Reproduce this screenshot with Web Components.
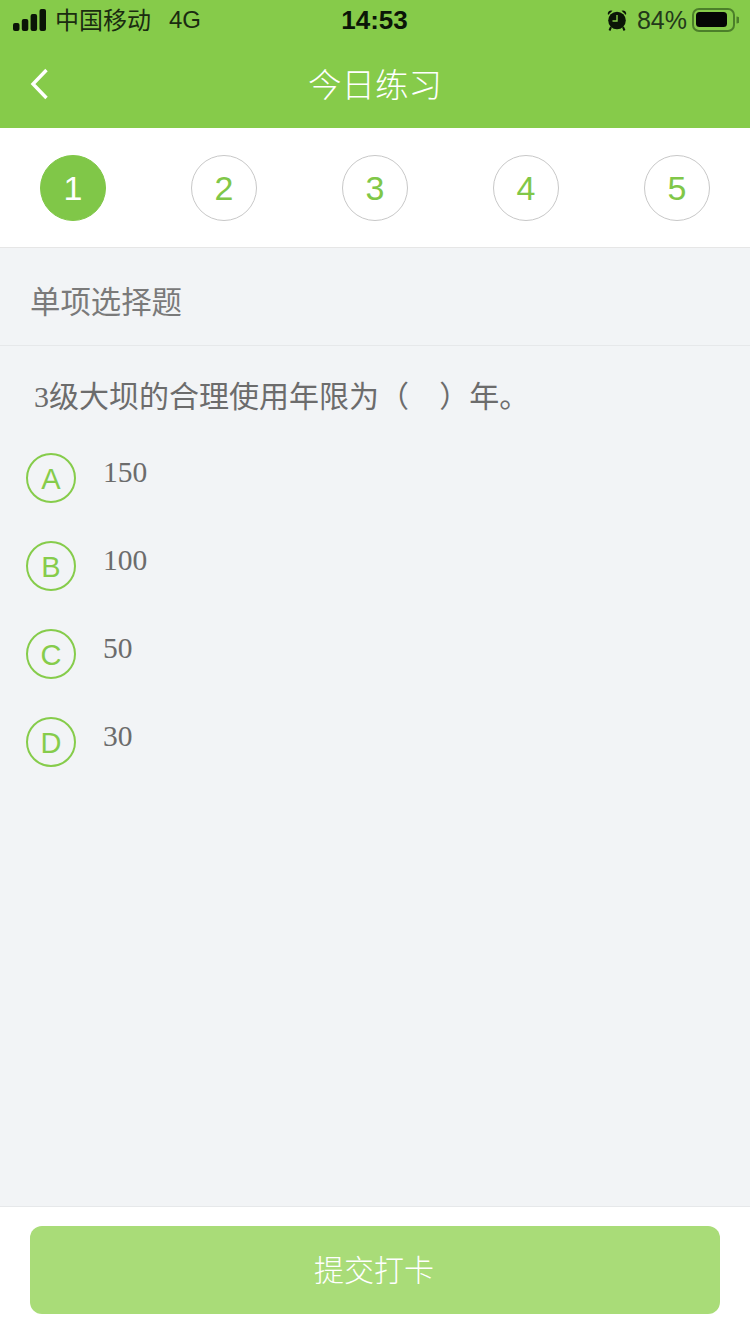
<!DOCTYPE html>
<html lang="zh">
<head>
<meta charset="utf-8">
<title>今日练习</title>
<style>
html, body { margin: 0; padding: 0; }
body { width: 750px; height: 1334px; overflow: hidden; font-family: "Liberation Sans", "Noto Sans CJK SC", sans-serif; }
practice-page { height: 1334px; }
</style>
</head>
<body>
<practice-page>
    <status-bar slot="top"></status-bar>
    <nav-bar slot="top" title="今日练习"></nav-bar>
    <step-list slot="top" count="5" current="1"></step-list>
    <section-title>单项选择题</section-title>
    <question-text><span style="font-family:'Liberation Serif','Noto Sans CJK SC',serif">3</span>级大坝的合理使用年限为（&nbsp;&nbsp;&nbsp;<span style="padding-left:10px">）</span>年。</question-text>
    <option-item letter="A">150</option-item>
    <option-item letter="B">100</option-item>
    <option-item letter="C">50</option-item>
    <option-item letter="D">30</option-item>
    <submit-bar slot="bottom">提交打卡</submit-bar>
</practice-page>

<script>
class PracticePage extends HTMLElement{
    constructor(){
        super();
        this.attachShadow({mode: 'open'}).innerHTML = `
        <style>
        :host { display: flex; flex-direction: column; width: 750px; background: #f2f4f6; }
        main { flex: 1; min-height: 0; }
        </style>
        <slot name="top"></slot>
        <main><slot></slot></main>
        <slot name="bottom"></slot>
        `;
    }
}

class StatusBar extends HTMLElement{
    constructor(){
        super();
        this.attachShadow({mode: 'open'}).innerHTML = `
        <style>
        :host { display: grid; grid-template-columns: 1fr auto 1fr; align-items: center; height: 40px; padding: 0 11px 0 13px;
            background: #86cb4a; color: #1a2c10; font-size: 24px; line-height: 40px; font-family: "Liberation Sans", "Noto Sans CJK SC", sans-serif; }
        .left, .right { display: flex; align-items: center; }
        .right { justify-content: flex-end; }
        .carrier { margin-left: 9px; font-size: 24px; height: 40px; line-height: 42px; }
        .net { margin-left: 18px; }
        .time { font-weight: bold; font-size: 26px; color: #0b1507; margin-left: -3px; }
        .pct { margin: 0 5px 0 9px; font-size: 25px; color: #22381a; }
        svg { display: block; }
        </style>
        <div class="left">
            <svg width="33" height="22" viewBox="0 0 33 22" fill="#0b1507">
                <rect x="0" y="14" width="6.5" height="8" rx="2"/>
                <rect x="8.8" y="10" width="6.5" height="12" rx="2"/>
                <rect x="17.6" y="5" width="6.5" height="17" rx="2"/>
                <rect x="26.5" y="0" width="6.5" height="22" rx="2"/>
            </svg>
            <span class="carrier">中国移动</span><span class="net">4G</span>
        </div>
        <div class="time">14:53</div>
        <div class="right">
            <svg width="22" height="22" viewBox="0 0 22 22">
                <path d="M2 6 L6.5 1.8 A3.3 3.3 0 0 0 2 6Z M20 6 L15.5 1.8 A3.3 3.3 0 0 1 20 6Z" fill="#0b1507"/>
                <circle cx="11" cy="11.5" r="8.8" fill="#0b1507"/>
                <path d="M5 18 L3.5 21.5 M17 18 L18.5 21.5" stroke="#0b1507" stroke-width="2"/>
                <path d="M11 6 V12 H6.5" fill="none" stroke="#86cb4a" stroke-width="1.4"/>
            </svg>
            <span class="pct">84%</span>
            <svg width="47" height="24" viewBox="0 0 47 24">
                <rect x="1" y="1" width="41" height="22" rx="6" fill="none" stroke="#4c7f2a" stroke-width="2"/>
                <rect x="4" y="4" width="31" height="15" rx="3.5" fill="#050505"/>
                <path d="M44.5 8.5 a3.5 3.5 0 0 1 0 7Z" fill="#4c7f2a"/>
            </svg>
        </div>
        `;
    }
}

class NavBar extends HTMLElement{
    constructor(){
        super();
        this.attachShadow({mode: 'open'}).innerHTML = `
        <style>
        :host { display: grid; grid-template-columns: 1fr auto 1fr; align-items: center; height: 88px; padding-left: 30px;
            background: #86cb4a; color: #fff; font-size: 33.5px; font-family: "Noto Sans CJK SC", sans-serif; font-weight: 300; }
        svg { display: block; }
        .title { margin-left: -30px; position: relative; top: -2px; }
        </style>
        <svg width="20" height="32" viewBox="0 0 20 32"><path d="M16.5 2 L3 16 L16.5 30" fill="none" stroke="#fff" stroke-width="3.4"/></svg>
        <div class="title">${this.getAttribute('title')}</div>
        <span></span>
        `;
    }
}

class StepList extends HTMLElement{
    constructor(){
        super();
        const count = +this.getAttribute('count');
        const current = +this.getAttribute('current');
        let items = '';
        for(let i = 1; i <= count; i++){
            items += `<div class="step ${i === current ? 'on' : ''}">${i}</div>`;
        }
        this.attachShadow({mode: 'open'}).innerHTML = `
        <style>
        :host { display: flex; justify-content: space-between; padding: 27px 40px 0; box-sizing: border-box;
            background: #fff; border-bottom: 1px solid #e6e6e6; height: 120px; font-family: "Liberation Sans", sans-serif; }
        .step { width: 66px; height: 66px; box-sizing: border-box; border-radius: 50%; border: 1px solid #c8c8c8;
            display: flex; align-items: center; justify-content: center; color: #80c748; font-size: 34px; }
        .on { background: #80c748; border-color: #80c748; color: #fff; }
        </style>
        ${items}
        `;
    }
}

class SectionTitle extends HTMLElement{
    constructor(){
        super();
        this.attachShadow({mode: 'open'}).innerHTML = `
        <style>
        :host { display: flex; align-items: center; padding: 6px 0 0 30px; box-sizing: border-box; border-bottom: 1px solid #e6e8ea; height: 98px;
            color: #7a7a7a; font-size: 30.4px; font-family: "Noto Sans CJK SC", sans-serif; font-weight: 400; }
        </style>
        <slot></slot>
        `;
    }
}

class QuestionText extends HTMLElement{
    constructor(){
        super();
        this.attachShadow({mode: 'open'}).innerHTML = `
        <style>
        :host { display: block; padding: 26px 0 0 34px; height: 81px; line-height: 44px; white-space: nowrap;
            color: #6c6c6c; font-size: 30px; font-family: "Noto Sans CJK SC", sans-serif; font-weight: 400; }
        </style>
        <slot></slot>
        `;
    }
}

class OptionItem extends HTMLElement{
    constructor(){
        super();
        this.attachShadow({mode: 'open'}).innerHTML = `
        <style>
        :host { display: flex; height: 88px; padding-left: 26px; color: #6c6c6c; font-family: "Liberation Serif", serif; font-size: 29.5px; }
        .badge { width: 50px; height: 50px; box-sizing: border-box; border: 2px solid #86cc4b; border-radius: 50%; flex: none; padding-top: 2px;
            display: flex; align-items: center; justify-content: center; color: #86cc4b;
            font-family: "Liberation Sans", sans-serif; font-size: 29px; }
        .text { margin-left: 27px; line-height: 38px; }
        </style>
        <div class="badge">${this.getAttribute('letter')}</div>
        <div class="text"><slot></slot></div>
        `;
    }
}

class SubmitBar extends HTMLElement{
    constructor(){
        super();
        this.attachShadow({mode: 'open'}).innerHTML = `
        <style>
        :host { display: block; height: 128px; padding: 19px 30px 0; box-sizing: border-box; background: #fff; border-top: 1px solid #e6e8ea; }
        button { display: block; width: 100%; height: 88px; border: 0; border-radius: 12px; background: #a9dc78; color: #fff; padding: 0 2px 4px 0;
            font-size: 30px; font-family: "Noto Sans CJK SC", sans-serif; font-weight: 300; }
        </style>
        <button><slot></slot></button>
        `;
    }
}

customElements.define('practice-page', PracticePage);
customElements.define('status-bar', StatusBar);
customElements.define('nav-bar', NavBar);
customElements.define('step-list', StepList);
customElements.define('section-title', SectionTitle);
customElements.define('question-text', QuestionText);
customElements.define('option-item', OptionItem);
customElements.define('submit-bar', SubmitBar);
</script>
</body>
</html>
